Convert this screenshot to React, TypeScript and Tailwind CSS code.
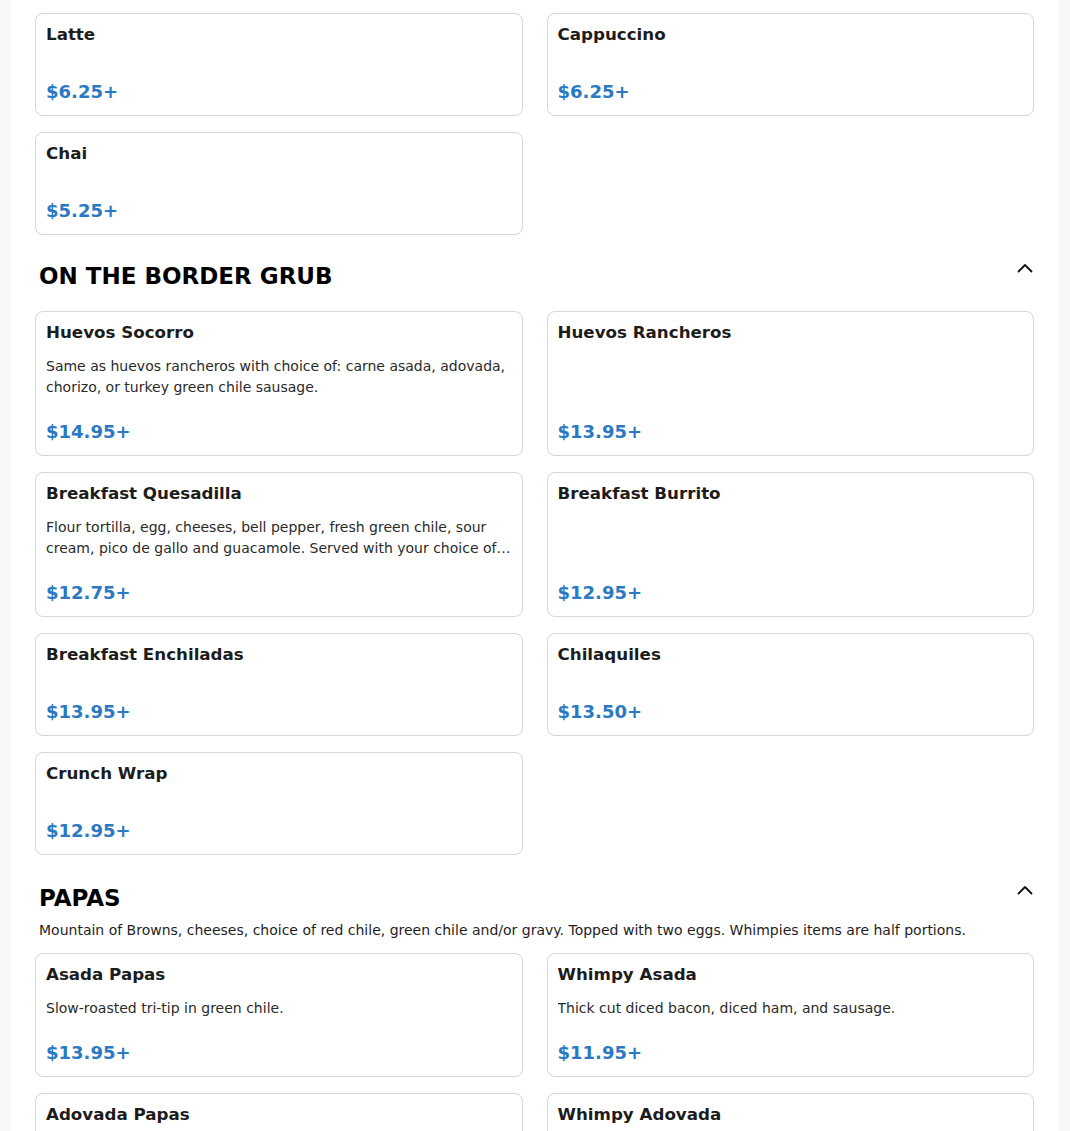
import React from "react";

type Item = { name: string; desc?: string; price: string };

const Chevron = () => (
  <svg width="16" height="10" viewBox="0 0 16 10" fill="none" className="block">
    <polyline points="1.5,8.5 8,2 14.5,8.5" stroke="#111" strokeWidth="1.8" strokeLinecap="round" strokeLinejoin="round" />
  </svg>
);

const Card = ({ item }: { item: Item }) => (
  <div className="border border-[#d6d6d6] rounded-[8px] bg-white p-[10px] flex flex-col">
    <div className="text-[16.7px] leading-[20px] font-bold text-[#1c1c1c]">{item.name}</div>
    <div className="flex-1 mt-[14px] text-[14px] leading-[21px] text-[#2a2a2a]">
      <div className="line-clamp-2">{item.desc ?? ""}</div>
    </div>
    <div className="mt-[21px] text-[18px] leading-[26px] font-bold text-[#2a79c2]">{item.price}</div>
  </div>
);

const Grid = ({ items }: { items: Item[] }) => (
  <div className="grid grid-cols-2 gap-x-[24px] gap-y-[16px]">
    {items.map((it) => (
      <Card key={it.name} item={it} />
    ))}
  </div>
);

const Section = ({
  title,
  desc,
  items,
  className,
}: {
  title: string;
  desc?: string;
  items: Item[];
  className: string;
}) => (
  <div className={className}>
    <div className="flex items-start justify-between pl-[4px]">
      <h2 className="text-[23px] leading-[32px] font-bold text-black">{title}</h2>
      <div className="pt-[3px] pr-[1px]">
        <Chevron />
      </div>
    </div>
    {desc ? (
      <p className="pl-[4px] mt-[6px] text-[14px] leading-[21px] text-[#1e1e1e]">{desc}</p>
    ) : null}
    <div className={desc ? "mt-[12px]" : "mt-[19px]"}>
      <Grid items={items} />
    </div>
  </div>
);

export default function App() {
  const drinks: Item[] = [
    { name: "Latte", price: "$6.25+" },
    { name: "Cappuccino", price: "$6.25+" },
    { name: "Chai", price: "$5.25+" },
  ];
  const grub: Item[] = [
    {
      name: "Huevos Socorro",
      desc: "Same as huevos rancheros with choice of: carne asada, adovada, chorizo, or turkey green chile sausage.",
      price: "$14.95+",
    },
    { name: "Huevos Rancheros", price: "$13.95+" },
    {
      name: "Breakfast Quesadilla",
      desc: "Flour tortilla, egg, cheeses, bell pepper, fresh green chile, sour cream, pico de gallo and guacamole. Served with your choice of breakfast meat.",
      price: "$12.75+",
    },
    { name: "Breakfast Burrito", price: "$12.95+" },
    { name: "Breakfast Enchiladas", price: "$13.95+" },
    { name: "Chilaquiles", price: "$13.50+" },
    { name: "Crunch Wrap", price: "$12.95+" },
  ];
  const papas: Item[] = [
    { name: "Asada Papas", desc: "Slow-roasted tri-tip in green chile.", price: "$13.95+" },
    { name: "Whimpy Asada", desc: "Thick cut diced bacon, diced ham, and sausage.", price: "$11.95+" },
    { name: "Adovada Papas", desc: "Pork marinated in red chile.", price: "$13.95+" },
    { name: "Whimpy Adovada", desc: "Pork marinated in red chile.", price: "$11.95+" },
  ];

  return (
    <div className="min-h-screen bg-[#f7f7f7] font-['DejaVu_Sans',sans-serif]">
      <div className="ml-[11px] w-[1047px] bg-white px-[24px] pt-[13px] pb-[40px]">
        <Grid items={drinks} />
        <Section className="mt-[25px]" title="ON THE BORDER GRUB" items={grub} />
        <Section
          className="mt-[27px]"
          title="PAPAS"
          desc="Mountain of Browns, cheeses, choice of red chile, green chile and/or gravy. Topped with two eggs. Whimpies items are half portions."
          items={papas}
        />
      </div>
    </div>
  );
}
